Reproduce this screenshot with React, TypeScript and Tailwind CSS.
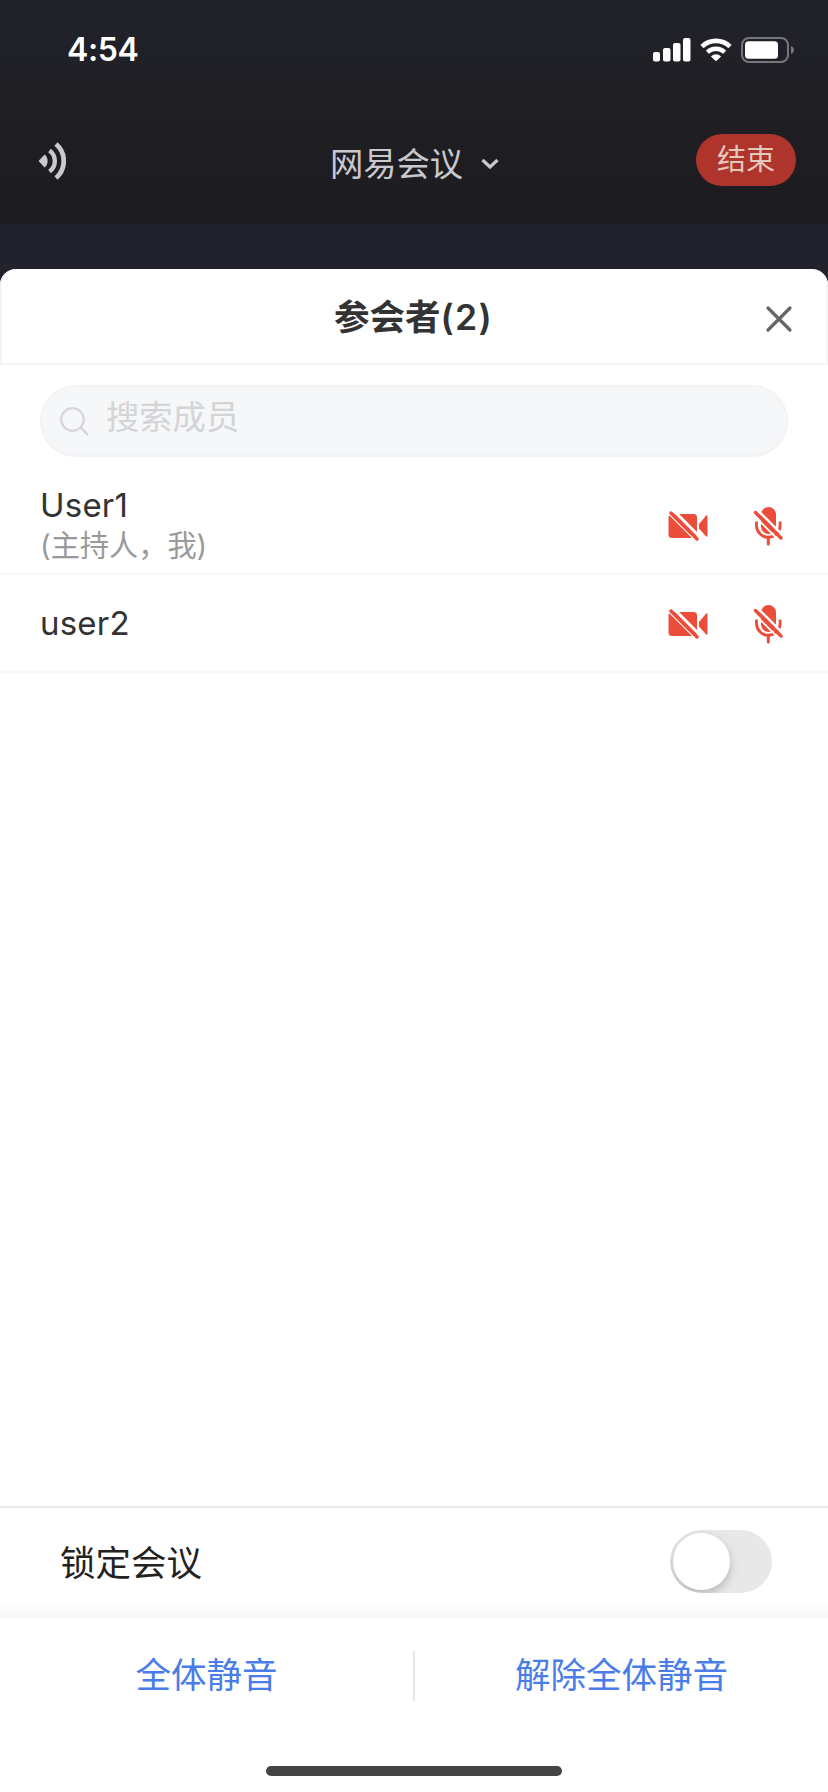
import React from "react";

const members = [
  { name: "User1", note: "(主持人，我)" },
  { name: "user2", note: "" },
];

function SignalIcon() {
  return (
    <svg className="h-6 w-[38px]" viewBox="0 0 38 24" fill="#fff">
      <rect x="0" y="14" width="7" height="9.5" rx="2" />
      <rect x="10" y="10" width="7.5" height="13.5" rx="2" />
      <rect x="20" y="5" width="7.5" height="18.5" rx="2" />
      <rect x="30" y="0" width="7.5" height="23.5" rx="2" />
    </svg>
  );
}

function WifiIcon() {
  return (
    <svg className="h-6 w-8" viewBox="0 0 32 24" fill="none">
      <path d="M2 8.6A20 20 0 0 1 30 8.6" stroke="#fff" strokeWidth="4.6" />
      <path d="M7.4 14.3A12.2 12.2 0 0 1 24.6 14.3" stroke="#fff" strokeWidth="4.4" />
      <path d="M16 23.2L10.9 18.4A7.4 7.4 0 0 1 21.1 18.4Z" fill="#fff" />
    </svg>
  );
}

function BatteryIcon() {
  return (
    <svg className="h-[26px] w-[54px]" viewBox="0 0 54 26" fill="none">
      <rect x="1" y="1" width="46" height="24" rx="7" stroke="#76777c" strokeWidth="2" />
      <rect x="4" y="4.2" width="33" height="17.5" rx="3.5" fill="#fff" />
      <path d="M50 9c2 .8 3 2.3 3 4s-1 3.2-3 4z" fill="#76777c" />
    </svg>
  );
}

function SpeakerIcon() {
  return (
    <svg className="h-10 w-7" viewBox="0 0 28 40" fill="none">
      <path d="M0.5 20L6.6 13.5Q9.6 16 9.6 20T6.6 26.5Z" fill="#c9c9cd" />
      <path d="M11.5 9.5A13 13 0 0 1 11.5 30.5" stroke="#c9c9cd" strokeWidth="4.4" />
      <path d="M18 3A22.5 22.5 0 0 1 18 37" stroke="#c9c9cd" strokeWidth="4.8" />
    </svg>
  );
}

function CameraOffIcon() {
  return (
    <svg className="h-[30px] w-10" viewBox="0 0 40 30" fill="none">
      <rect x="0.5" y="3" width="28.5" height="24" rx="3.5" fill="#ec4c3a" />
      <path d="M31 13L38.2 4.5Q39.5 3.8 39.5 5.3V24.7Q39.5 26.2 38.2 25.5L31 17.5Z" fill="#ec4c3a" />
      <path d="M6.5 0.5L33 27" stroke="#fff" strokeWidth="3" />
      <path d="M-0.5 1.5L27.5 29.5" stroke="#fff" strokeWidth="1.4" />
      <path d="M3 2L29 28" stroke="#ec4c3a" strokeWidth="3.4" strokeLinecap="round" />
    </svg>
  );
}

function MicOffIcon() {
  return (
    <svg className="h-10 w-[30px]" viewBox="0 0 30 40" fill="none">
      <rect x="8" y="1" width="15" height="27" rx="7.5" fill="#ec4c3a" />
      <path d="M3.5 15.5V19.5A11.8 11.8 0 0 0 27.1 19.5V15.5" stroke="#ec4c3a" strokeWidth="2.8" />
      <path d="M15.3 31V38" stroke="#ec4c3a" strokeWidth="3" strokeLinecap="round" />
      <path d="M5 4.5L31 30.5" stroke="#fff" strokeWidth="2.6" />
      <path d="M0 8.5L26 34.5" stroke="#fff" strokeWidth="1.8" />
      <path d="M2.5 6.5L28 32" stroke="#ec4c3a" strokeWidth="3.4" strokeLinecap="round" />
    </svg>
  );
}

export default function App() {
  return (
    <div
      lang="zh-CN"
      className="flex h-[1792px] w-[828px] flex-col overflow-hidden bg-[#21222b] font-['Inter','Noto_Sans_CJK_SC',sans-serif]"
    >
      <header className="flex h-[224px] shrink-0 flex-col bg-linear-to-b from-[#22222c] via-[#1f1f24] via-45% to-[#1b1b20]">
        <div className="flex h-[100px] items-center justify-between pr-[33px] pl-[67px]">
          <time className="text-[32px] leading-none font-semibold tracking-[-0.4px] text-white">4:54</time>
          <div className="flex items-center">
            <SignalIcon />
            <span className="w-[9px]" />
            <WifiIcon />
            <span className="w-[9px]" />
            <BatteryIcon />
          </div>
        </div>
        <div className="grid h-[124px] grid-cols-[1fr_auto_1fr] items-start pr-8 pl-[38px]">
          <div className="pt-[41px]">
            <SpeakerIcon />
          </div>
          <div className="mt-10 flex h-12 items-center gap-[18px] pr-[5px] text-[33.3px] leading-[48px] whitespace-nowrap text-[#c9c9cd]">
            <span>网易会议</span>
            <svg className="h-3 w-[18px]" viewBox="0 0 18 12" fill="none">
              <path d="M1.5 2L9 9L16.5 2" stroke="#c9c9cd" strokeWidth="3.2" />
            </svg>
          </div>
          <button className="mt-[34px] h-[52px] w-[100px] justify-self-end rounded-full bg-[#ae342c] text-[29px] leading-[52px] text-[#e6c8bb]">
            结束
          </button>
        </div>
      </header>

      <main className="mt-[45px] flex flex-1 flex-col rounded-t-2xl bg-white">
        <div className="grid h-24 grid-cols-[1fr_auto_1fr] items-center rounded-t-2xl border-x-2 border-b-2 border-[#f5f5f5] pt-1 pr-[33px] pl-8">
          <span />
          <h1 className="text-[35.5px] leading-[52px] font-semibold text-[#333]">
            参会者<span className="tracking-[1.3px]">(2)</span>
          </h1>
          <svg className="mt-0.5 h-7 w-7 justify-self-end" viewBox="0 0 28 28" fill="none">
            <path d="M3 3L25 25M25 3L3 25" stroke="#666" strokeWidth="3.2" strokeLinecap="round" />
          </svg>
        </div>

        <div className="mx-10 mt-5 flex h-[72px] items-center rounded-full border-2 border-[#f2f3f5] bg-[#f6f7f9] pl-[18px]">
          <svg className="mt-0.5 h-[30px] w-[30px]" viewBox="0 0 30 30" fill="none">
            <circle cx="12.5" cy="12.5" r="11.3" stroke="#d5d6d8" strokeWidth="2.2" />
            <path d="M20.5 20.5L28 28" stroke="#d5d6d8" strokeWidth="2.4" />
          </svg>
          <span className="-mt-2 ml-4 text-[33.3px] leading-[48px] text-[#d3d4d6]">搜索成员</span>
        </div>

        <ul className="mt-5">
          {members.map((m) => (
            <li key={m.name} className="flex h-[98px] items-center justify-between border-b-2 border-[#f9f9f9] pr-[45px] pl-10">
              <div className="flex flex-col">
                <span className="text-[33px] leading-[40px] tracking-[0.2px] text-[#333]">{m.name}</span>
                {m.note && <span className="text-[29.2px] leading-[41px] text-[#999]">{m.note}</span>}
              </div>
              <div className="flex items-center gap-[45px] pt-0.5">
                <CameraOffIcon />
                <MicOffIcon />
              </div>
            </li>
          ))}
        </ul>

        <div className="mt-auto flex h-[112px] items-center justify-between border-t-2 border-[#e8e8e8] bg-linear-to-b from-white from-85% to-[#f8f8f8] pr-14 pl-[60px]">
          <span className="pt-0.5 text-[35.5px] leading-[52px] text-[#222]">锁定会议</span>
          <div className="-mt-[3px] flex h-[63px] w-[102px] items-center overflow-hidden rounded-full bg-[#e8e8e8] pl-[3px]">
            <div className="h-[57px] w-[57px] rounded-full bg-white shadow-[0_4px_10px_rgba(0,0,0,0.22)]" />
          </div>
        </div>

        <div className="flex h-[116px] items-center">
          <button className="flex-1 text-[35.5px] leading-[52px] text-[#4a7de8]">全体静音</button>
          <span className="h-[50px] w-0.5 bg-[#e8e8e8]" />
          <button className="flex-1 text-[35.5px] leading-[52px] text-[#4a7de8]">解除全体静音</button>
        </div>

        <div className="flex h-[58px] justify-center pt-8">
          <div className="h-2.5 w-[296px] rounded-full bg-[#444]" />
        </div>
      </main>
    </div>
  );
}
